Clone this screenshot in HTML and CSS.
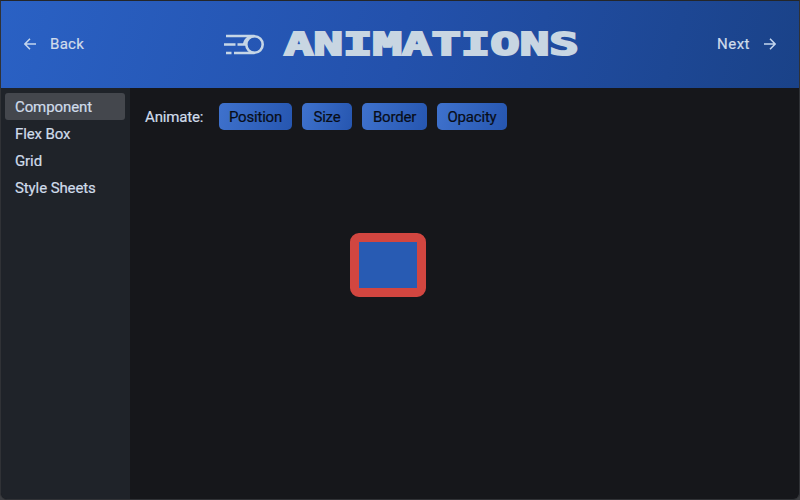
FILE: index.html
```
<!DOCTYPE html>
<html lang="en">
<head>
<meta charset="utf-8">
<title>Animations</title>
<link rel="stylesheet" href="styles.css">
</head>
<body>
<div class="window">
  <header class="header">
    <a class="nav"><svg class="arrow" viewBox="0 0 12 12"><path d="M12 6H1M6 .8L.9 6 6 11.2"/></svg><span class="t-back">Back</span></a>
    <div class="brand">
      <svg class="comet" viewBox="0 0 40 21"><circle cx="30.5" cy="10.5" r="8.2"/><path d="M2 2H30.5M0 10.5H11.5M13.5 10.5H22M2 19H7.5M10 19H30.5M20 10.5Q21 5 26 3"/></svg>
      <h1 class="title"><span>ANIMATIONS</span></h1>
    </div>
    <a class="nav"><span class="t-next">Next</span><svg class="arrow" viewBox="0 0 12 12"><path d="M0 6H11M6 .8L11.1 6 6 11.2"/></svg></a>
  </header>
  <div class="body">
    <nav class="sidebar">
      <a class="item active">Component</a>
      <a class="item">Flex Box</a>
      <a class="item">Grid</a>
      <a class="item">Style Sheets</a>
    </nav>
    <main class="main">
      <div class="controls">
        <span class="label">Animate:</span>
        <button class="btn position">Position</button>
        <button class="btn size">Size</button>
        <button class="btn border">Border</button>
        <button class="btn opacity">Opacity</button>
      </div>
      <div class="stage"><div class="box"></div></div>
    </main>
  </div>
</div>
</body>
</html>
```
FILE: styles.css
```
* { box-sizing: border-box; }
body {
  margin: 0;
  background: #3c3e42;
  font: 400 15px/17px Roboto, sans-serif;
  color: #d0dcea;
}
.window {
  height: 500px;
  display: flex;
  flex-direction: column;
  border: 1px solid #303236;
  border-top-color: #242629;
  border-radius: 0 0 7px 7px;
  overflow: hidden;
  background: #16171b;
}
.header {
  flex: 0 0 87px;
  display: flex;
  align-items: center;
  justify-content: space-between;
  padding: 0 23px 1px;
  background: linear-gradient(105deg, #2a61c4 0%, #2351ac 50%, #1a4288 100%);
}
.nav {
  display: flex;
  align-items: center;
  gap: 14px;
  -webkit-text-stroke: .2px currentColor;
}
.arrow {
  width: 12px;
  height: 12px;
  fill: none;
  stroke: #c4d6ee;
  stroke-width: 1.5;
}
.t-back { width: 35px; letter-spacing: .3px; }
.t-next { width: 33px; letter-spacing: .5px; }
.brand {
  display: flex;
  align-items: center;
  gap: 20px;
}
.comet {
  width: 40px;
  height: 21px;
  margin-top: 1px;
  fill: none;
  stroke: #c6d6e6;
  stroke-width: 2.6;
}
.title {
  margin: 0;
  width: 295px;
  height: 36px;
  font: 700 32px/36px "DejaVu Sans Mono", monospace;
  color: #c8d6e2;
}
.title span {
  display: inline-block;
  transform: scaleX(1.53);
  transform-origin: 0 50%;
  -webkit-text-stroke: 2px #c8d6e2;
}
.body {
  flex: 1;
  display: flex;
}
.sidebar {
  width: 129px;
  padding: 5px 5px 0 4px;
  background: #1f2329;
}
.item {
  display: block;
  height: 27px;
  padding: 6px 10px 4px;
  letter-spacing: -.1px;
  -webkit-text-stroke: .2px currentColor;
  border-radius: 3px;
}
.active { background: #44474d; }
.main {
  flex: 1;
  padding: 15px;
}
.controls {
  display: flex;
  align-items: center;
  gap: 10px;
}
.label {
  width: 64px;
  padding-top: 2px;
  letter-spacing: -.15px;
  -webkit-text-stroke: .2px currentColor;
}
.btn {
  height: 27px;
  padding: 2px 0 0;
  border: 0;
  border-radius: 5px;
  background: linear-gradient(105deg, #3f72cd, #2656b0);
  font: inherit;
  letter-spacing: -.2px;
  -webkit-text-stroke: .2px currentColor;
  color: #080d18;
}
.position { width: 73px; }
.size { width: 50px; }
.border { width: 65px; }
.opacity { width: 70px; }
.stage { padding: 103px 0 0 205px; }
.box {
  width: 76px;
  height: 64px;
  border: 9px solid #d24640;
  border-radius: 9px;
  background: #285bb3;
}
```
